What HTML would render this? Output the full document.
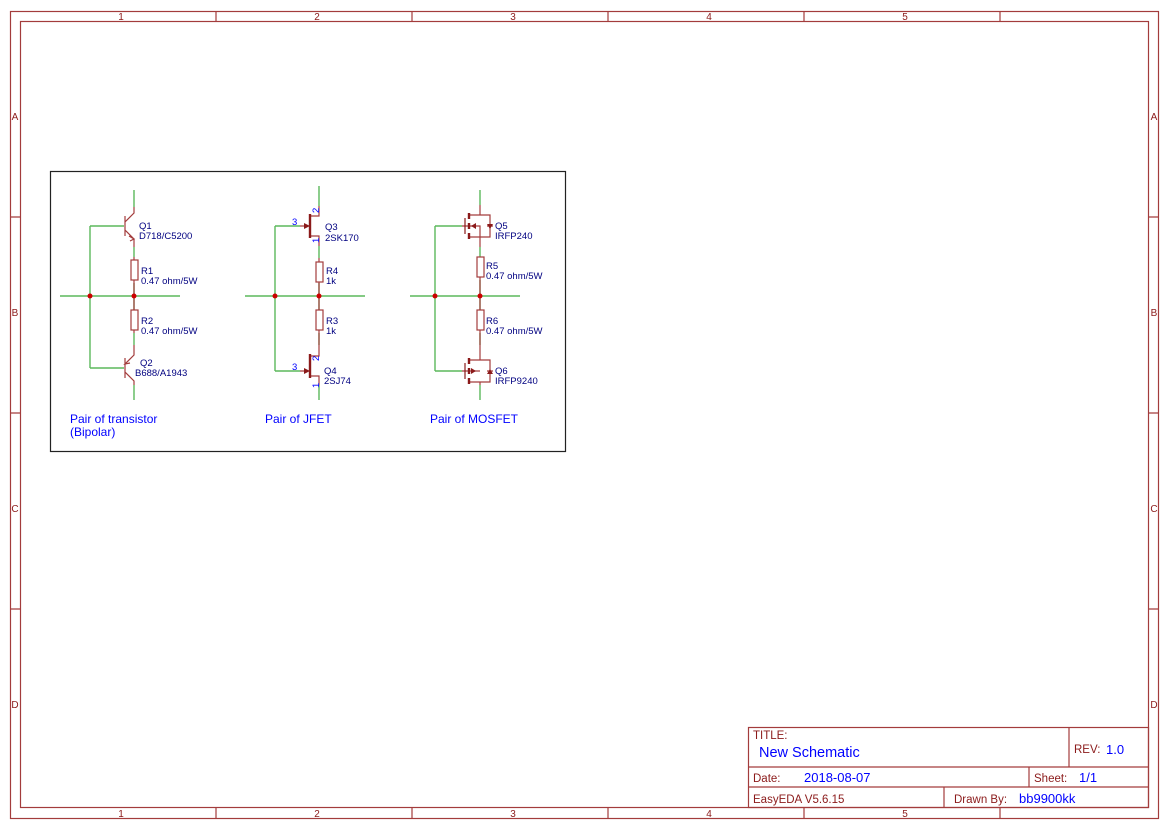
<!DOCTYPE html><html><head><style>body{margin:0;background:#fff}svg{display:block}</style></head><body>
<svg width="1169" height="828" viewBox="0 0 1169 828" xmlns="http://www.w3.org/2000/svg" font-family="Liberation Sans, DejaVu Sans, sans-serif">
<g fill="none" stroke="#a33c3c" stroke-width="1.2">
<rect x="10.5" y="11.5" width="1148" height="807"/>
<rect x="20.5" y="21.5" width="1128" height="786"/>
<path d="M216 11V21M412 11V21M608 11V21M804 11V21M1000 11V21M216 808V818M412 808V818M608 808V818M804 808V818M1000 808V818M10 217H20M10 413H20M10 609H20M1149 217H1159M1149 413H1159M1149 609H1159"/>
<rect x="748.5" y="727.5" width="400" height="80"/>
<path d="M748 767H1149M748 787H1149M1069 727V767M1029 767V787M944 787V808"/>
</g>
<g fill="#8b1a1a" font-size="10" text-anchor="middle">
<text x="121" y="20">1</text><text x="317" y="20">2</text><text x="513" y="20">3</text><text x="709" y="20">4</text><text x="905" y="20">5</text>
<text x="121" y="817">1</text><text x="317" y="817">2</text><text x="513" y="817">3</text><text x="709" y="817">4</text><text x="905" y="817">5</text>
<text x="15" y="120">A</text><text x="15" y="316">B</text><text x="15" y="512">C</text><text x="15" y="708">D</text>
<text x="1154" y="120">A</text><text x="1154" y="316">B</text><text x="1154" y="512">C</text><text x="1154" y="708">D</text>
</g>
<g fill="#8b1a1a" font-size="11.5">
<text x="753" y="739">TITLE:</text><text x="1074" y="753">REV:</text><text x="753" y="782">Date:</text><text x="1034" y="782">Sheet:</text><text x="753" y="803">EasyEDA V5.6.15</text><text x="954" y="803">Drawn By:</text>
</g>
<g fill="#0000ff" font-size="13">
<text x="759" y="757" font-size="14.5">New Schematic</text><text x="1106" y="754">1.0</text><text x="804" y="782">2018-08-07</text><text x="1079" y="782">1/1</text><text x="1019" y="803">bb9900kk</text>
</g>
<rect x="50.5" y="171.5" width="515" height="280" fill="none" stroke="#222" stroke-width="1.2"/>
<g stroke="#5cb85c" stroke-width="1.4" fill="none">
<path d="M60 296H180M90 226V368M90 226H124M90 368H124M134 190V207M134 247V257M134 283V310M134 333V345M134 385V400"/>
<path d="M245 296H365M275 226V371M275 226H300M275 371H300M319 186V206M319 246V258M319 283V310M319 333V345M319 385V400"/>
<path d="M410 296H520M435 226V371M435 226H462M435 371H462M480 190V205M480 247V257M480 280V310M480 333V345M480 385V400"/>
</g>
<g stroke="#a33c3c" stroke-width="1.2" fill="none">
<path d="M125 216V236M125 222L134 213V207M125 230L134 239V247M129 236L134 239L130 241"/>
<path d="M125 358V378M125 372L134 381V385M125 364L134 355V345M129 360L125 364L130 363"/>
<rect x="131" y="260" width="7" height="20"/><rect x="131" y="310" width="7" height="20"/>
<path d="M134 257V260M134 280V296M134 296V310M134 330V333"/>
<rect x="316" y="262" width="7" height="20"/><rect x="316" y="310" width="7" height="20"/>
<path d="M319 258V262M319 282V310M319 330V345"/>
<rect x="477" y="257" width="7" height="20"/><rect x="477" y="310" width="7" height="20"/>
<path d="M480 277V310M480 330V345"/>
<path d="M300 226H307M319 206V216H310M319 246V236H310"/>
<path d="M300 371H307M319 345V356H310M319 385V376H310"/>
<path d="M462 226H474M480 205V215H469V215M469 237H480V247M469 226H480V237M480 215H490V237H480M487 226H493"/>
<path d="M462 371H474M480 345V360H469M469 382H480V385M469 371H480M480 360H490V382H480M487 371H493"/>
</g>
<g stroke="#8b1a1a" stroke-width="2.4"><path d="M310 214V238M310 354V378M469 213V219M469 223V229M469 233V239M469 358V364M469 368V374M469 378V384"/><path d="M465 218V234M465 363V379" stroke-width="1.2"/></g>
<g fill="#8b1a1a"><path d="M304 223L310 226L304 229Z"/><path d="M304 368L310 371L304 374Z"/><path d="M471 226L476 223V229Z"/><path d="M476 371L471 368V374Z"/><path d="M487 224H493L490 229Z"/><path d="M487 374H493L490 369Z"/></g>
<g fill="#cc0000"><circle cx="90" cy="296" r="2.5"/><circle cx="134" cy="296" r="2.5"/><circle cx="275" cy="296" r="2.5"/><circle cx="319" cy="296" r="2.5"/><circle cx="435" cy="296" r="2.5"/><circle cx="480" cy="296" r="2.5"/></g>
<g fill="#000080" font-size="9.5">
<text x="139" y="229">Q1</text><text x="139" y="239">D718/C5200</text>
<text x="141" y="274">R1</text><text x="141" y="284">0.47 ohm/5W</text>
<text x="141" y="324">R2</text><text x="141" y="334">0.47 ohm/5W</text>
<text x="140" y="366">Q2</text><text x="135" y="376">B688/A1943</text>
<text x="325" y="230">Q3</text><text x="325" y="241">2SK170</text>
<text x="326" y="274">R4</text><text x="326" y="284">1k</text>
<text x="326" y="324">R3</text><text x="326" y="334">1k</text>
<text x="324" y="374">Q4</text><text x="324" y="384">2SJ74</text>
<text x="495" y="229">Q5</text><text x="495" y="239">IRFP240</text>
<text x="486" y="269">R5</text><text x="486" y="279">0.47 ohm/5W</text>
<text x="486" y="324">R6</text><text x="486" y="334">0.47 ohm/5W</text>
<text x="495" y="374">Q6</text><text x="495" y="384">IRFP9240</text>
</g>
<g fill="#0000ff" font-size="9.5">
<text x="292" y="225">3</text><text x="292" y="370">3</text>
<text transform="translate(319,213) rotate(-90)">2</text><text transform="translate(319,243) rotate(-90)">1</text>
<text transform="translate(319,361) rotate(-90)">2</text><text transform="translate(319,388) rotate(-90)">1</text>
</g>
<g fill="#0000ff" font-size="12">
<text x="70" y="423">Pair of transistor</text><text x="70" y="436">(Bipolar)</text>
<text x="265" y="423">Pair of JFET</text><text x="430" y="423">Pair of MOSFET</text>
</g>
</svg></body></html>
